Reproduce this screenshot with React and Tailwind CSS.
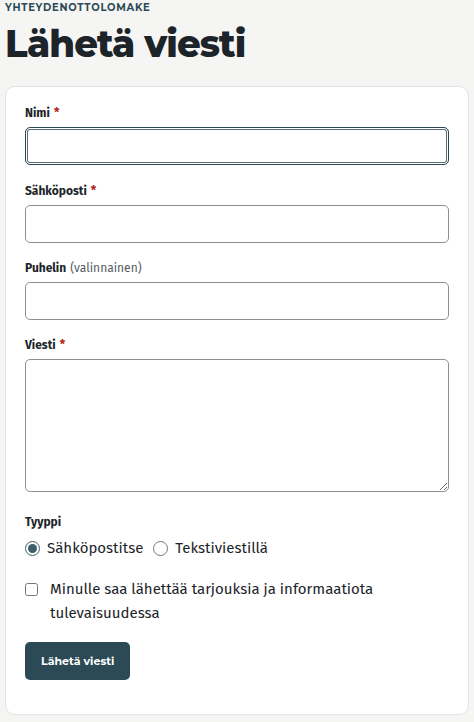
import { useState } from "react";

const body = { fontFamily: "'Fira Sans', Roboto, 'Noto Sans', sans-serif" };
const display = { fontFamily: "Montserrat, Inter, 'Noto Sans', sans-serif" };

function Label({ children, required, hint }) {
  return (
    <label className="mb-[6px] block h-4 text-[12px] font-bold leading-4 text-[#1c2429]">
      {children}
      {required && <span className="ml-1 text-[#b3261e]">*</span>}
      {hint && <span className="ml-1 font-normal text-[#555d61]">{hint}</span>}
    </label>
  );
}

export default function App() {
  const [type, setType] = useState("email");

  return (
    <div className="min-h-screen bg-[#f5f5f3] px-[5px] pb-[6px] text-[#1c2429]" style={body}>
      <p className="pt-px text-[10px] font-bold uppercase leading-[14px] tracking-[0.075em] text-[#2b4a55]" style={display}>
        Yhteydenottolomake
      </p>
      <h1 className="mt-[6px] text-[37px] font-extrabold leading-[46px] tracking-[-0.025em] text-[#1c2429]" style={display}>
        Lähetä viesti
      </h1>

      <form className="mt-[19px] rounded-[10px] border border-[#e0e4e4] bg-white px-[19px] pb-[34px] pt-[18px]">
        <div>
          <Label required>Nimi</Label>
          <input
            type="text"
            className="block h-[38px] w-full rounded-[5px] border border-[#2b4a55] bg-white shadow-[inset_0_0_0_1px_#ffffff,inset_0_0_0_2px_#5a6e75] outline-none"
          />
        </div>
        <div className="mt-[18px]">
          <Label required>Sähköposti</Label>
          <input type="email" className="block h-[38px] w-full rounded-[5px] border border-[#8a9194] bg-white outline-none" />
        </div>
        <div className="mt-[17px]">
          <Label hint="(valinnainen)">Puhelin</Label>
          <input type="tel" className="block h-[38px] w-full rounded-[5px] border border-[#8a9194] bg-white outline-none" />
        </div>
        <div className="mt-[17px]">
          <Label required>Viesti</Label>
          <textarea className="block h-[133px] w-full resize-y rounded-[5px] border border-[#8a9194] bg-white outline-none" />
        </div>

        <fieldset className="mt-[22px]">
          <legend className="mb-2 block h-4 text-[12px] font-bold leading-4">Tyyppi</legend>
          <div className="flex items-center gap-[10px] text-[15px] leading-[20px]">
            <label className="flex items-center gap-[7px]">
              <input
                type="radio"
                name="type"
                checked={type === "email"}
                onChange={() => setType("email")}
                className="m-0 h-[15px] w-[15px] accent-[#3d5e6a]"
              />
              Sähköpostitse
            </label>
            <label className="flex items-center gap-[7px]">
              <input
                type="radio"
                name="type"
                checked={type === "sms"}
                onChange={() => setType("sms")}
                className="m-0 h-[15px] w-[15px] accent-[#3d5e6a]"
              />
              Tekstiviestillä
            </label>
          </div>
        </fieldset>

        <label className="mt-[19px] flex items-start gap-[12px] text-[15px] leading-6">
          <input type="checkbox" className="m-0 mt-[6px] h-[13px] w-[13px] shrink-0 accent-[#3d5e6a]" />
          <span>Minulle saa lähettää tarjouksia ja informaatiota tulevaisuudessa</span>
        </label>

        <button
          type="button"
          className="mt-[17px] h-[38px] rounded-[5px] bg-[#2b4a55] px-4 text-[11px] font-bold text-white"
          style={display}
        >
          Lähetä viesti
        </button>
      </form>
    </div>
  );
}
